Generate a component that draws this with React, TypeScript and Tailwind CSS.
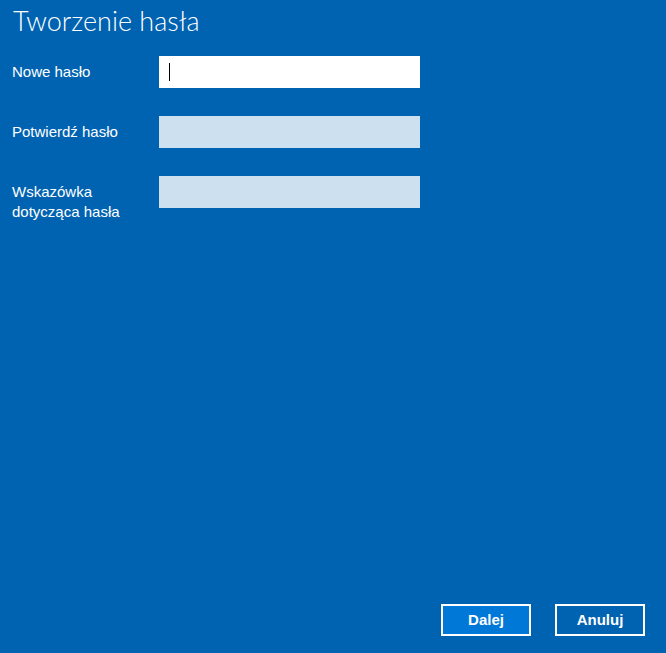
import React from "react";

const labelFont = { fontFamily: '"Liberation Sans", Arial, sans-serif' };

function Row({ label, active }: { label: React.ReactNode; active?: boolean }) {
  return (
    <div className="flex items-start">
      <div className="w-[147px] pt-[6px] text-[15px] leading-5 text-white" style={labelFont}>
        {label}
      </div>
      <div
        className={
          "w-[261px] h-8 flex items-center " + (active ? "bg-white" : "bg-[#cce0ef]")
        }
      >
        {active && <span className="ml-[10px] w-px h-[18px] bg-black" />}
      </div>
    </div>
  );
}

export default function App() {
  return (
    <div className="w-[666px] h-[653px] bg-[#0063b1] flex flex-col overflow-hidden">
      <div
        className="pl-[13px] pt-[5px] h-[37px] text-[27px] leading-8 font-light text-white"
        style={{ fontFamily: 'Lato, "Open Sans", sans-serif' }}
      >
        Tworzenie hasła
      </div>
      <div className="mt-[19px] pl-3 flex flex-col gap-7">
        <Row label="Nowe hasło" active />
        <Row label="Potwierdź hasło" />
        <Row
          label={
            <>
              Wskazówka
              <br />
              dotycząca hasła
            </>
          }
        />
      </div>
      <div className="flex-1" />
      <div className="flex justify-end gap-6 pr-[21px] pb-[17px]" style={labelFont}>
        <button className="w-[90px] h-8 border-2 border-white bg-[#0078d7] text-white text-[15px] font-bold">
          Dalej
        </button>
        <button className="w-[90px] h-8 border-2 border-white bg-transparent text-white text-[15px] font-bold">
          Anuluj
        </button>
      </div>
    </div>
  );
}
